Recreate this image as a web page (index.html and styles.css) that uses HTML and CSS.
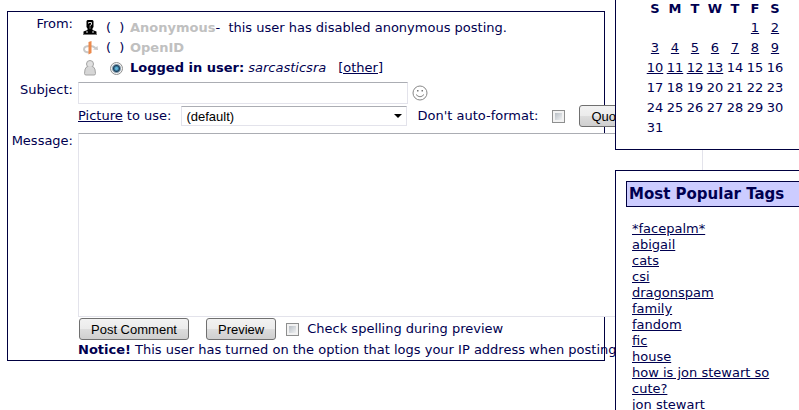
FILE: index.html
```
<!DOCTYPE html>
<html lang="en">
<head>
    <meta charset="UTF-8">
    <meta name="viewport" content="width=device-width, initial-scale=1.0">
    <title>Post Comment</title>
    <link rel="stylesheet" href="styles.css">
</head>
<body>

    <!-- Comment form -->
    <form class="comment-form">
        <div class="label">From:</div>
        <div class="from-list">
            <div class="from-row">
                <svg class="icon" viewBox="0 0 16 16">
                    <path d="M5.500 0h5l1 1v6l-1 1.500V10l4 1.500V14H1.500v-2.500l4-1.500V8.500L4.500 7V1z" fill="#000"/>
                    <path d="M6.500 3.500V2.500h3v2L8 5.500v1M8 7.500v1M4 12h2M10 12h2" fill="none" stroke="#ddd"/>
                    <path d="M1 14.500h14" stroke="#777"/>
                </svg>
                <span class="choice">(&nbsp;&nbsp;)</span>
                <span><b class="disabled">Anonymous</b>-&nbsp; this user has disabled anonymous posting.</span>
            </div>
            <div class="from-row">
                <svg class="icon" viewBox="0 0 16 16">
                    <path d="M8 12.500C4 12.500 2 11 2 9.300C2 7.500 4 6 8 6c2 0 4 .6 5.500 2" fill="none" stroke="#c8c8c8" stroke-width="2"/>
                    <path d="M11 9.500l5 .5-.5-4z" fill="#c8c8c8"/>
                    <path d="M6.500 2L9.500 1v12l-3 1.500z" fill="#ec8a4c"/>
                </svg>
                <span class="choice">(&nbsp;&nbsp;)</span>
                <b class="disabled">OpenID</b>
            </div>
            <div class="from-row">
                <svg class="icon person" viewBox="0 0 16 16">
                    <path d="M5 6.500Q2.500 8 2.500 13.500q0 1.500 1.500 1.500h8q1.500 0 1.500-1.500 0-5.500-2.500-7z" fill="#d6d6d6" stroke="#a4a4a4"/>
                    <circle cx="8" cy="4" r="3.500" fill="#e0e0e0" stroke="#a4a4a4"/>
                    <path d="M6 6.500h4v2H6z" fill="#d8d8d8"/>
                </svg>
                <span class="choice"><input type="radio" name="usertype" id="user-cookie" class="radio" checked></span>
                <label for="user-cookie"><b>Logged in user:</b> <i>sarcasticsra</i></label>
                <a href="#" class="other">[other]</a>
            </div>
        </div>

        <label class="label" for="subject">Subject:</label>
        <div class="subject-row">
            <input type="text" id="subject" class="subject">
            <svg class="smiley" viewBox="0 0 16 16">
                <circle cx="8" cy="8" r="7" fill="#fff" stroke="#888"/>
                <path d="M4 9.500q4 4.500 8 0" fill="none" stroke="#888"/>
                <path d="M5 5h1.500v1.500H5zM9.500 5H11v1.500H9.500z" fill="#777"/>
            </svg>
        </div>

        <div class="options-row">
            <label for="userpic"><a href="#">Picture</a> to use:</label>
            <select id="userpic" class="userpic">
                <option>(default)</option>
            </select>
            <label class="format-label" for="noformat">Don't auto-format:</label>
            <input type="checkbox" id="noformat" class="checkbox">
            <button type="button" class="btn btn-quote">Quote</button>
        </div>

        <label class="label" for="message">Message:</label>
        <textarea id="message" class="message"></textarea>

        <div class="submit-row">
            <button type="button" class="btn">Post Comment</button>
            <button type="button" class="btn">Preview</button>
            <span class="spell">
                <input type="checkbox" id="spellcheck" class="checkbox">
                <label for="spellcheck">Check spelling during preview</label>
            </span>
        </div>
        <p class="notice"><b>Notice!</b> This user has turned on the option that logs your IP address when posting.</p>
    </form>

    <!-- Sidebar -->
    <aside class="sidebar">
        <div class="box calendar-box">
            <table class="calendar">
                <thead>
                    <tr><th>S</th><th>M</th><th>T</th><th>W</th><th>T</th><th>F</th><th>S</th></tr>
                </thead>
                <tbody>
                    <tr><td></td><td></td><td></td><td></td><td></td><td><a href="#">1</a></td><td><a href="#">2</a></td></tr>
                    <tr><td><a href="#">3</a></td><td><a href="#">4</a></td><td><a href="#">5</a></td><td><a href="#">6</a></td><td><a href="#">7</a></td><td><a href="#">8</a></td><td><a href="#">9</a></td></tr>
                    <tr><td><a href="#">10</a></td><td><a href="#">11</a></td><td><a href="#">12</a></td><td><a href="#">13</a></td><td>14</td><td>15</td><td>16</td></tr>
                    <tr><td>17</td><td>18</td><td>19</td><td>20</td><td>21</td><td>22</td><td>23</td></tr>
                    <tr><td>24</td><td>25</td><td>26</td><td>27</td><td>28</td><td>29</td><td>30</td></tr>
                    <tr><td>31</td><td></td><td></td><td></td><td></td><td></td><td></td></tr>
                </tbody>
            </table>
        </div>

        <div class="box tags-box">
            <h2>Most Popular Tags</h2>
            <ul class="tags">
                <li><a href="#">*facepalm*</a></li>
                <li><a href="#">abigail</a></li>
                <li><a href="#">cats</a></li>
                <li><a href="#">csi</a></li>
                <li><a href="#">dragonspam</a></li>
                <li><a href="#">family</a></li>
                <li><a href="#">fandom</a></li>
                <li><a href="#">fic</a></li>
                <li><a href="#">house</a></li>
                <li><a href="#">how is jon stewart so cute?</a></li>
                <li><a href="#">jon stewart</a></li>
            </ul>
        </div>
    </aside>

</body>
</html>
```

FILE: styles.css
```
* {
    margin: 0;
    padding: 0;
    box-sizing: border-box;
}

body {
    display: grid;
    grid-template-columns: minmax(0, 1fr) 184px;
    column-gap: 10px;
    align-items: start;
    height: 100vh;
    padding-left: 7px;
    overflow: hidden;
    background: #fff;
    color: #000050;
    font-family: Verdana, "DejaVu Sans", sans-serif;
    font-size: 13px;
    line-height: 16px;
}

a {
    color: #000050;
}

/* Comment form */
.comment-form {
    display: grid;
    grid-template-columns: 65px minmax(0, 1fr);
    column-gap: 5px;
    margin-top: 11px;
    padding-top: 4px;
    padding-bottom: 2px;
    border: 1px solid #000040;
    white-space: nowrap;
}

.label {
    text-align: right;
}

.from-list {
    padding: 2px 0 4px 4px;
}

.from-row {
    display: flex;
    align-items: center;
    height: 20px;
}

.icon {
    width: 16px;
    height: 16px;
    margin-right: 8px;
}

.choice {
    display: flex;
    width: 24px;
}

.disabled {
    color: #c0c0c0;
}

.other {
    margin-left: 12px;
}

.radio {
    appearance: none;
    width: 13px;
    height: 13px;
    margin-left: 4px;
    border: 1px solid #8e8f8f;
    border-radius: 50%;
    background: radial-gradient(circle, #5fb4d8 0 1px, #1a4260 3px, #f4f4f4 5px);
}

.subject-row {
    display: flex;
    align-items: center;
    gap: 4px;
}

.subject {
    width: 330px;
    height: 22px;
    border: 1px solid #e3e3eb;
    border-top-color: #abadb3;
}

.smiley {
    width: 16px;
    height: 16px;
}

/* Option row and submit row sit under the fields */
.options-row,
.submit-row,
.notice {
    grid-column: 2;
}

.options-row {
    display: flex;
    align-items: center;
    height: 24px;
    margin-bottom: 5px;
}

.userpic {
    appearance: none;
    flex: none;
    width: 226px;
    height: 20px;
    margin: 0 10px;
    padding-left: 4px;
    border: 1px solid #e3e3eb;
    border-top-color: #abadb3;
    background: #fff url("data:image/svg+xml,%3Csvg xmlns='http://www.w3.org/2000/svg' width='8' height='4'%3E%3Cpath d='M0 0h8L4 4z'/%3E%3C/svg%3E") no-repeat right 4px center;
    color: #000;
    font: 13px Arial, "Liberation Sans", sans-serif;
}

.format-label {
    margin-right: 14px;
}

.checkbox {
    appearance: none;
    flex: none;
    width: 13px;
    height: 13px;
    border: 1px solid #8e8f8f;
    background: linear-gradient(135deg, #a8b0b8, #fff);
    box-shadow: inset 0 0 0 2px #f2f2f2;
}

.btn {
    flex: none;
    height: 22px;
    padding: 0 11px;
    border: 1px solid #707070;
    border-radius: 3px;
    background: linear-gradient(#f2f2f2, #ebebeb 50%, #dddddd 50%, #cfcfcf);
    color: #000;
    font: 13px Arial, "Liberation Sans", sans-serif;
}

.btn-quote {
    margin-left: 14px;
}

.message {
    display: block;
    width: 625px;
    height: 184px;
    border: 1px solid #e3e3eb;
    border-top-color: #abadb3;
    background: #fff;
    resize: none;
}

.submit-row {
    display: flex;
    align-items: center;
    gap: 17px;
    padding: 1px 0 2px 1px;
}

.spell {
    display: flex;
    align-items: center;
    gap: 8px;
    margin-left: -7px;
}

/* Sidebar */
.sidebar {
    display: grid;
    gap: 20px;
}

.box {
    border: 1px solid #000040;
    border-right: none;
    background: #fff;
}

.calendar-box {
    padding: 0 0 11px 29px;
    border-top: none;
}

.calendar {
    width: 140px;
    table-layout: fixed;
    border-collapse: collapse;
    text-align: center;
}

.calendar td {
    height: 20px;
}

.calendar th {
    height: 18px;
}

.tags-box {
    padding: 10px 0 10px 10px;
}

.tags-box h2 {
    padding: 3px 2px;
    border: 1px solid #000040;
    border-right: none;
    background: #ccccff;
    font-size: 15px;
    line-height: 18px;
}

.tags {
    padding: 14px 10px 0 6px;
    list-style: none;
}
```
